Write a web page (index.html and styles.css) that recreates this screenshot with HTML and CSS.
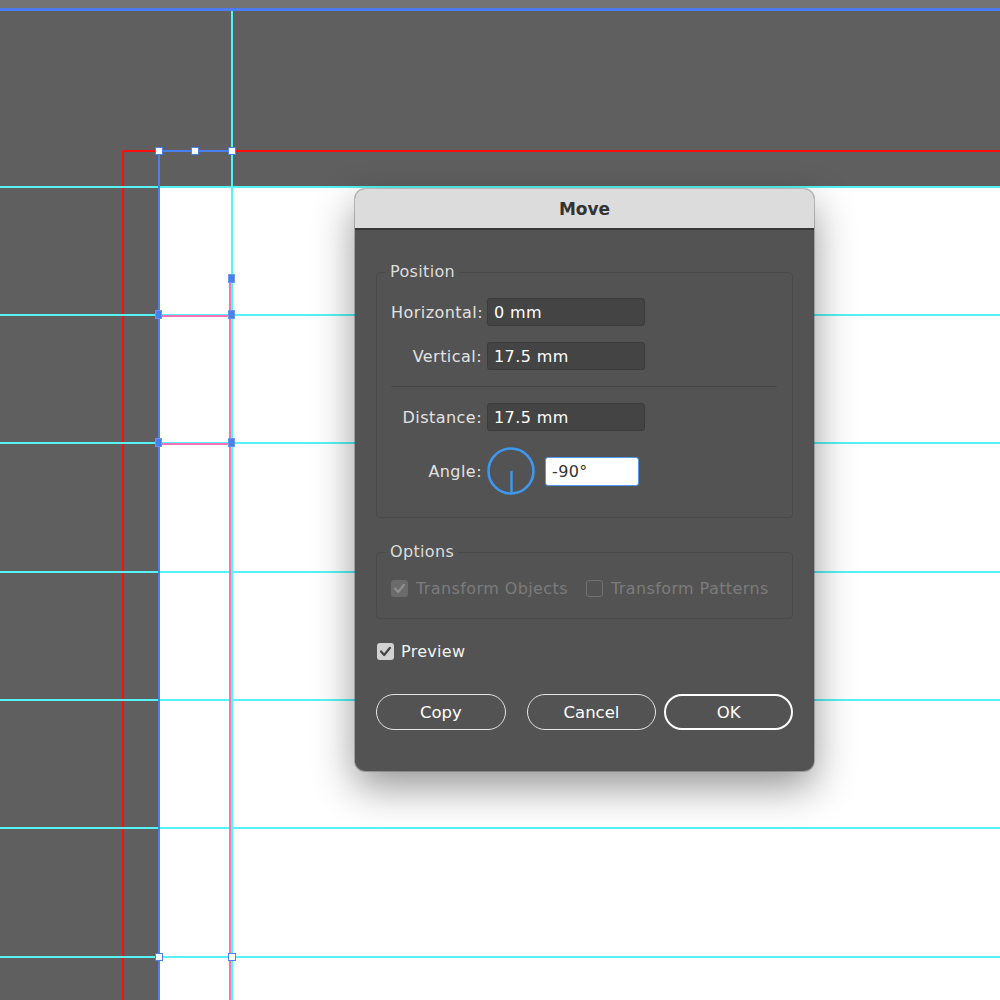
FILE: index.html
```html
<!DOCTYPE html>
<html>
<head>
<meta charset="utf-8">
<link rel="stylesheet" href="styles.css">
</head>
<body>
<div class="screen">
  <div class="topbar"></div>
  <div class="topline"></div>

  <div class="artboard"></div>
  <div class="red-v"></div>
  <div class="red-h"></div>

  <div class="guide-h g1"></div>
  <div class="guide-h g2"></div>
  <div class="guide-h g3"></div>
  <div class="guide-h g4"></div>
  <div class="guide-h g5"></div>
  <div class="guide-h g6"></div>
  <div class="guide-h g7"></div>

  <div class="sel-v"></div>
  <div class="sel-h"></div>
  <div class="pink-v"></div>
  <div class="pink-h p1"></div>
  <div class="pink-h p2"></div>
  <div class="guide-v"></div>

  <div class="handle h1"></div>
  <div class="handle h2"></div>
  <div class="handle h3"></div>
  <div class="handle h4"></div>
  <div class="handle h5"></div>
  <div class="handle filled f1"></div>
  <div class="handle filled f2"></div>
  <div class="handle filled f3"></div>
  <div class="handle filled f4"></div>
  <div class="handle filled f5"></div>

  <div class="dialog">
    <div class="titlebar">Move</div>
    <div class="dlg-body">
      <fieldset class="group group-position">
        <legend>Position</legend>
        <div class="row first">
          <span class="label">Horizontal:</span>
          <div class="input">0 mm</div>
        </div>
        <div class="row">
          <span class="label">Vertical:</span>
          <div class="input">17.5 mm</div>
        </div>
        <div class="divider"></div>
        <div class="row">
          <span class="label">Distance:</span>
          <div class="input">17.5 mm</div>
        </div>
        <div class="row angle-row">
          <span class="label">Angle:</span>
          <svg class="dial" width="48" height="48" viewBox="0 0 48 48">
            <circle cx="24" cy="24" r="22.5" fill="none" stroke="#3e98f0" stroke-width="2.6"/>
            <line x1="24.5" y1="24" x2="24.5" y2="46" stroke="#3e98f0" stroke-width="2.4"/>
          </svg>
          <div class="input angle-input">-90°</div>
        </div>
      </fieldset>

      <fieldset class="group group-options">
        <legend>Options</legend>
        <div class="opt-row">
          <span class="cb cb-disabled">
            <svg width="17" height="17" viewBox="0 0 17 17"><polyline points="4,8.5 7.2,12 13,4.8" fill="none" stroke="#8f8f8f" stroke-width="2.2" stroke-linecap="round" stroke-linejoin="round"/></svg>
          </span>
          <span class="opt-text">Transform Objects</span>
          <span class="cb cb-empty"></span>
          <span class="opt-text">Transform Patterns</span>
        </div>
      </fieldset>

      <div class="preview-row">
        <span class="cb cb-on">
          <svg width="17" height="17" viewBox="0 0 17 17"><polyline points="4,8.5 7.2,12 13,4.8" fill="none" stroke="#454545" stroke-width="2.2" stroke-linecap="round" stroke-linejoin="round"/></svg>
        </span>
        <span class="preview-text">Preview</span>
      </div>

      <div class="buttons">
        <div class="btn btn-copy">Copy</div>
        <div class="btn btn-cancel">Cancel</div>
        <div class="btn btn-ok">OK</div>
      </div>
    </div>
  </div>
</div>
</body>
</html>
```
FILE: styles.css
```css
html, body {
  margin: 0;
  padding: 0;
}
body {
  width: 1000px;
  height: 1000px;
  overflow: hidden;
  background: #5f5f5f;
  font-family: "DejaVu Sans", "Liberation Sans", sans-serif;
}
.screen {
  position: relative;
  width: 1000px;
  height: 1000px;
  overflow: hidden;
}
.topbar {
  height: 8px;
  background: #737373;
}
.topline {
  height: 3px;
  background: #4b7cf2;
}

/* canvas items */
.artboard {
  position: absolute;
  left: 160px;
  top: 188px;
  right: 0;
  bottom: 0;
  background: #ffffff;
}
.red-v {
  position: absolute;
  left: 122px;
  top: 150px;
  width: 2px;
  bottom: 0;
  background: #ff0d0d;
  border-top-left-radius: 2px;
}
.red-h {
  position: absolute;
  left: 122px;
  top: 150px;
  height: 2px;
  right: 0;
  background: #ff0d0d;
  border-top-left-radius: 2px;
}
.guide-h {
  position: absolute;
  left: 0;
  right: 0;
  height: 2px;
  background: #55f3f3;
}
.g1 { top: 186px; }
.g2 { top: 314px; }
.g3 { top: 442px; }
.g4 { top: 571px; }
.g5 { top: 699px; }
.g6 { top: 827px; }
.g7 { top: 956px; }
.guide-v {
  position: absolute;
  left: 231px;
  top: 11px;
  width: 2px;
  bottom: 0;
  background: #55f3f3;
}
.sel-v {
  position: absolute;
  left: 158px;
  top: 151px;
  width: 2px;
  bottom: 0;
  background: #4a7ff0;
}
.sel-h {
  position: absolute;
  left: 159px;
  top: 150px;
  width: 73px;
  height: 2px;
  background: #4a7ff0;
}
.pink-v {
  position: absolute;
  left: 229px;
  top: 279px;
  width: 2px;
  bottom: 0;
  background: #f472b6;
}
.pink-h {
  position: absolute;
  left: 160px;
  width: 71px;
  height: 2px;
  background: #f472b6;
}
.p1 { top: 315px; }
.p2 { top: 443px; }

.handle {
  position: absolute;
  width: 6px;
  height: 6px;
  margin: -4.5px 0 0 -4.5px;
  background: #ffffff;
  border: 1.5px solid #4a80f0;
}
.handle.filled {
  width: 5px;
  height: 7px;
  margin: -5px 0 0 -4px;
  background: #4a7ff0;
  border-color: #6a97f4;
}
.h1 { left: 159px; top: 151px; }
.h2 { left: 195px; top: 151px; }
.h3 { left: 232px; top: 151px; }
.h4 { left: 159px; top: 957px; }
.h5 { left: 232px; top: 957px; }
.f1 { left: 232px; top: 279px; }
.f2 { left: 159px; top: 315px; }
.f3 { left: 232px; top: 315px; }
.f4 { left: 159px; top: 443px; }
.f5 { left: 232px; top: 443px; }

/* dialog */
.dialog {
  position: absolute;
  left: 355px;
  top: 189px;
  width: 459px;
  height: 582px;
  border-radius: 10px;
  background: #535353;
  box-shadow: 0 16px 40px rgba(0, 0, 0, 0.42), 0 0 0 1px rgba(0, 0, 0, 0.22);
  overflow: hidden;
  display: flex;
  flex-direction: column;
}
.titlebar {
  height: 39px;
  flex: none;
  background: #dcdcdc;
  border-bottom: 2px solid #373737;
  display: flex;
  align-items: center;
  justify-content: center;
  font-weight: bold;
  font-size: 17px;
  color: #333333;
}
.dlg-body {
  padding: 0 21px;
  display: flex;
  flex-direction: column;
}
.group {
  margin: 0;
  border: 1px solid #4a4a4a;
  border-radius: 4px;
  min-width: 0;
  padding: 0 15px 22px 14px;
}
.group-position {
  margin-top: 32px;
}
.group-options {
  margin-top: 24px;
  padding-bottom: 21px;
}
.group legend {
  padding: 0 4px;
  margin-left: -5px;
  font-size: 16px;
  line-height: 20px;
  letter-spacing: 0.35px;
  color: #dddddd;
}
.row {
  display: flex;
  align-items: center;
  height: 28px;
  margin-top: 16px;
}
.label {
  width: 91px;
  margin-right: 5px;
  text-align: right;
  font-size: 16px;
  letter-spacing: 0.45px;
  color: #e2e2e2;
  white-space: nowrap;
}
.input {
  width: 158px;
  height: 28px;
  box-sizing: border-box;
  background: #444444;
  border: 1px solid #3b3b3b;
  border-radius: 3px;
  color: #ffffff;
  font-size: 16px;
  letter-spacing: 0.4px;
  padding-left: 6px;
  display: flex;
  align-items: center;
}
.divider {
  height: 1px;
  background: #454545;
  margin-top: 16px;
}
.angle-row {
  height: 48px;
}
.dial {
  display: block;
  flex: none;
}
.angle-input {
  margin-left: 10px;
  width: 94px;
  height: 29px;
  background: #ffffff;
  border: 1.5px solid #4a9bf2;
  color: #333333;
}
.opt-row {
  display: flex;
  align-items: center;
  height: 17px;
  margin-top: 18px;
}
.cb {
  width: 17px;
  height: 17px;
  box-sizing: border-box;
  border-radius: 3px;
  flex: none;
  display: block;
}
.cb svg {
  display: block;
}
.cb-disabled {
  background: #6b6b6b;
}
.cb-empty {
  border: 1px solid #727272;
  margin-left: 18px;
}
.cb-on {
  background: #d2d2d2;
}
.opt-text {
  margin-left: 8px;
  font-size: 16px;
  letter-spacing: 0.4px;
  color: #7c7c7c;
  white-space: nowrap;
}
.preview-row {
  display: flex;
  align-items: center;
  height: 17px;
  margin-top: 24px;
  margin-left: 1px;
}
.preview-text {
  margin-left: 7px;
  font-size: 16px;
  letter-spacing: 0.3px;
  color: #f2f2f2;
}
.buttons {
  display: flex;
  margin-top: 34px;
}
.btn {
  height: 36px;
  box-sizing: border-box;
  border-radius: 18px;
  border: 1.5px solid #e4e4e4;
  display: flex;
  align-items: center;
  justify-content: center;
  font-size: 16.5px;
  color: #ffffff;
}
.btn-copy {
  width: 130px;
}
.btn-cancel {
  width: 130px;
  margin-left: 21px;
}
.btn-ok {
  width: 129px;
  margin-left: 8px;
  border: 2.5px solid #ffffff;
}
```
